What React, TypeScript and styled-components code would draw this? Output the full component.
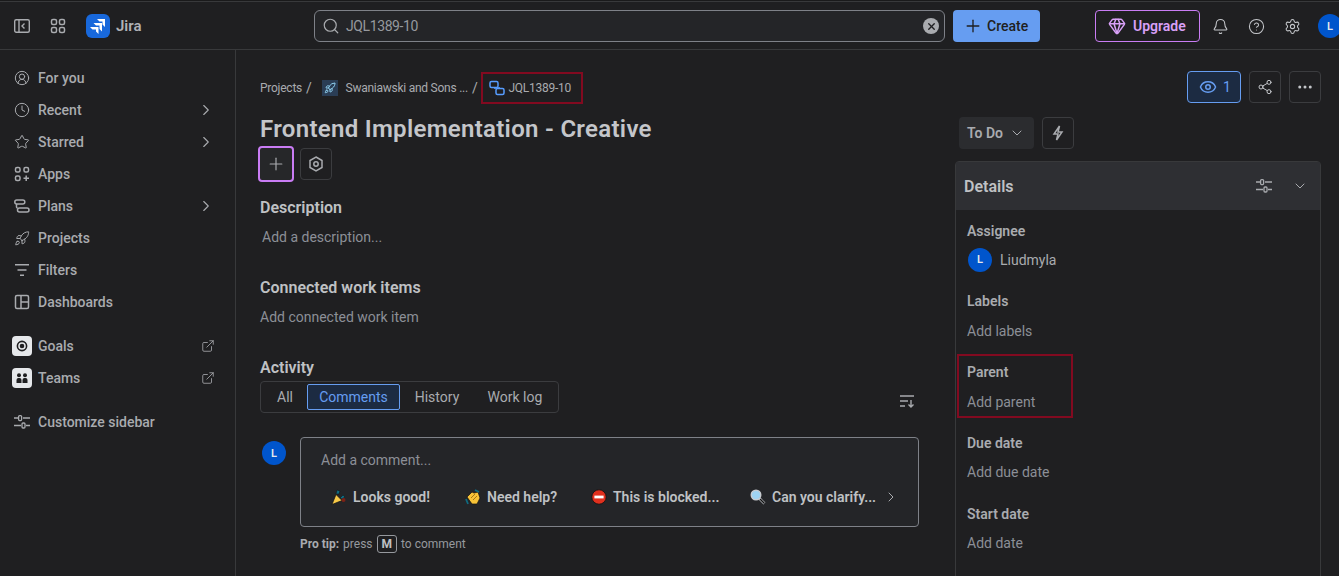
import React from 'react';
import styled, { createGlobalStyle } from 'styled-components';
import {
  Search, Plus, Gem, Bell, CircleHelp, Settings, Eye, Share2, Ellipsis, ChevronRight, ChevronDown,
  CircleUserRound, Clock, Star, Rocket, ExternalLink, X,
} from 'lucide-react';

const GlobalStyle = createGlobalStyle`
  html, body { margin: 0; padding: 0; background: #1f1f21; }
  body { font-family: Roboto, "Noto Sans", sans-serif; color: #bfc1c4; overflow: hidden; }
  * { box-sizing: border-box; }
`;

const Page = styled.div`
  width: 1339px;
  height: 576px;
  overflow: hidden;
  display: flex;
  flex-direction: column;
  border-top: 1px solid #1a1a1b;
`;

const TopBar = styled.header`
  height: 49px;
  flex: none;
  display: flex;
  align-items: center;
  border-top: 1px solid #38393b;
  border-bottom: 1px solid #38393b;
  padding-top: 1px;
`;

const TopLeft = styled.div`
  width: 314px;
  flex: none;
  display: flex;
  align-items: center;
  padding-left: 14px;
  color: #a9abaf;
`;

const AppsGrid = styled.svg`
  margin-left: 20px;
`;

const Logo = styled.span`
  width: 24px;
  height: 24px;
  margin-left: 20px;
  border-radius: 6px;
  background: #1868db;
  display: flex;
  align-items: center;
  justify-content: center;
`;

const LogoName = styled.span`
  margin-left: 6px;
  font-size: 15px;
  font-weight: 600;
  color: #b0b2b6;
`;

const SearchBox = styled.div`
  width: 631px;
  height: 32px;
  flex: none;
  display: flex;
  align-items: center;
  padding: 0 5px 0 7px;
  border: 1px solid #7e8188;
  border-radius: 6px;
  background: #242528;
  color: #a9abaf;
  font-size: 14px;
`;

const SearchText = styled.span`
  margin-left: 6px;
  flex: 1;
  color: #96999e;
  letter-spacing: -0.4px;
`;

const ClearBadge = styled.span`
  width: 16px;
  height: 16px;
  border-radius: 50%;
  background: #a9abaf;
  color: #1f1f21;
  display: flex;
  align-items: center;
  justify-content: center;
`;

const CreateButton = styled.button`
  width: 87px;
  height: 32px;
  margin-left: 8px;
  flex: none;
  display: flex;
  align-items: center;
  gap: 4px;
  padding: 0 0 0 10px;
  border: 0;
  border-radius: 4px;
  background: #669df1;
  color: #1f1f21;
  font: 500 14px Roboto, sans-serif;
`;

const UpgradeButton = styled.button`
  width: 105px;
  height: 32px;
  margin-left: 55px;
  flex: none;
  display: flex;
  align-items: center;
  gap: 7px;
  padding: 0 0 0 12px;
  border: 1px solid #c97cf4;
  border-radius: 4px;
  background: transparent;
  color: #d8a0f7;
  font: 600 14px Roboto, sans-serif;
`;

const TopIcons = styled.div`
  display: flex;
  align-items: center;
  gap: 18px;
  margin-left: 11px;
  color: #c4c6ca;
`;

const TopIcon = styled.span`
  width: 18px;
  height: 18px;
  display: flex;
  align-items: center;
  justify-content: center;
`;

const Avatar = styled.span<{ $edge?: boolean }>`
  width: 24px;
  height: 24px;
  flex: none;
  border-radius: 50%;
  background: #0055cc;
  color: #e6e8eb;
  font-size: 11px;
  font-weight: 600;
  display: flex;
  align-items: center;
  justify-content: center;
  margin-left: ${(p) => (p.$edge ? '-1px' : '0')};
`;

const Body = styled.div`
  flex: 1;
  min-height: 0;
  display: flex;
`;

const Sidebar = styled.nav`
  width: 236px;
  flex: none;
  padding-top: 12px;
  border-right: 1px solid #38393b;
`;

const NavRow = styled.div<{ $gapBefore?: number }>`
  height: 32px;
  margin-top: ${(p) => p.$gapBefore ?? 0}px;
  display: flex;
  align-items: center;
  padding: 0 20px 0 14px;
  color: #a9abaf;
  font-size: 14px;
  font-weight: 500;
`;

const NavIcon = styled.span`
  width: 16px;
  height: 16px;
  margin-right: 8px;
  flex: none;
  display: flex;
  align-items: center;
  justify-content: center;
`;

const NavTile = styled.span`
  width: 20px;
  height: 20px;
  margin: 0 6px 0 -2px;
  flex: none;
  border-radius: 4px;
  background: #e6e8eb;
  display: flex;
  align-items: center;
  justify-content: center;
`;

const NavLabel = styled.span`
  flex: 1;
`;

const Main = styled.main`
  flex: 1;
  min-width: 0;
  display: flex;
  position: relative;
`;

const Content = styled.section`
  width: 683px;
  flex: none;
  padding: 21px 0 0 24px;
`;

const Crumbs = styled.div`
  height: 33px;
  display: flex;
  align-items: center;
  font-size: 12px;
  letter-spacing: -0.25px;
  color: #a9abaf;
`;

const Sep = styled.span`
  margin: 0 4px;
  font-size: 14px;
`;

const ProjectThumb = styled.span`
  width: 16px;
  height: 16px;
  margin: 0 8px 0 6px;
  background: #2a3d55;
  display: flex;
  align-items: center;
  justify-content: center;
`;

const CurrentCrumb = styled.span`
  height: 32px;
  width: 102px;
  display: flex;
  align-items: center;
  gap: 3px;
  padding-left: 6px;
  border: 2px solid #820a20;
`;

const Title = styled.h1`
  margin: 9px 0 0;
  font-size: 24px;
  line-height: 32px;
  font-weight: 600;
  letter-spacing: 0.3px;
  color: #c4c6ca;
`;

const ActionRow = styled.div`
  margin: 1px 0 0 -2px;
  display: flex;
  align-items: center;
  gap: 6px;
`;

const AddButton = styled.span`
  width: 36px;
  height: 36px;
  border: 2px solid #c97cf4;
  border-radius: 4px;
  background: #262729;
  color: #a9abaf;
  display: flex;
  align-items: center;
  justify-content: center;
`;

const IconButton = styled.span<{ $muted?: boolean }>`
  width: 32px;
  height: 32px;
  flex: none;
  border: 1px solid #3b3c3f;
  border-radius: 4px;
  color: ${(p) => (p.$muted ? '#a9abaf' : '#c4c6ca')};
  display: flex;
  align-items: center;
  justify-content: center;
`;

const SectionTitle = styled.h2<{ $top: number }>`
  margin: ${(p) => p.$top}px 0 0;
  font-size: 16px;
  line-height: 20px;
  font-weight: 600;
  color: #bfc1c4;
`;

const Placeholder = styled.p<{ $indent?: boolean }>`
  margin: 9px 0 0 ${(p) => (p.$indent ? '2px' : '0')};
  font-size: 14px;
  line-height: 20px;
  color: #8c8f97;
`;

const TabRow = styled.div`
  margin-top: 3px;
  width: 659px;
  display: flex;
  align-items: center;
  justify-content: space-between;
`;

const Tabs = styled.div`
  width: 299px;
  height: 32px;
  display: flex;
  align-items: center;
  padding-left: 2px;
  border: 1px solid #3b3c3f;
  border-radius: 4px;
`;

const Tab = styled.span<{ $active?: boolean; $w: number }>`
  width: ${(p) => p.$w}px;
  height: 26px;
  display: flex;
  align-items: center;
  justify-content: center;
  font-size: 14px;
  border-radius: 2px;
  border: 1px solid ${(p) => (p.$active ? '#669df1' : 'transparent')};
  background: ${(p) => (p.$active ? '#1c2b42' : 'transparent')};
  color: ${(p) => (p.$active ? '#669df1' : '#a9abaf')};
`;

const SortIcon = styled.svg`
  margin: 8px 4px 0 0;
`;

const CommentRow = styled.div`
  margin-top: 24px;
  display: flex;
  gap: 14px;
  padding-left: 2px;
`;

const CommentAvatarWrap = styled.div`
  padding-top: 4px;
`;

const CommentCol = styled.div`
  width: 619px;
`;

const CommentBox = styled.div`
  height: 90px;
  padding: 12px 20px 0;
  border: 1px solid #7e8188;
  border-radius: 4px;
  background: #242528;
`;

const CommentHint = styled.div`
  font-size: 14px;
  line-height: 20px;
  color: #8c8f97;
`;

const Chips = styled.div`
  margin: 17px 0 0 10px;
  display: flex;
  align-items: center;
  height: 20px;
`;

const Chip = styled.span<{ $w: number }>`
  width: ${(p) => p.$w}px;
  flex: none;
  display: flex;
  align-items: center;
  gap: 6px;
  font-size: 14px;
  font-weight: 600;
  white-space: nowrap;
  color: #bfc1c4;
`;

const ChipNext = styled.span`
  flex: none;
  display: flex;
  color: #a9abaf;
`;

const ProTip = styled.div`
  margin-top: 8px;
  display: flex;
  align-items: center;
  gap: 4px;
  font-size: 12px;
  color: #96999e;
  b { font-weight: 700; color: #a9abaf; }
`;

const Key = styled.kbd`
  height: 18px;
  padding: 0 4px;
  border: 1px solid #96999e;
  border-radius: 3px;
  display: inline-flex;
  align-items: center;
  font: 700 12px Roboto, sans-serif;
  color: #bfc1c4;
`;

const Aside = styled.aside`
  width: 366px;
  flex: none;
  margin-left: 36px;
`;

const StatusRow = styled.div`
  margin: 67px 0 0 4px;
  display: flex;
  gap: 8px;
`;

const StatusButton = styled.span`
  width: 75px;
  height: 32px;
  padding-left: 8px;
  display: flex;
  align-items: center;
  gap: 6px;
  border-radius: 4px;
  background: #2b2c2f;
  color: #a9abaf;
  font-size: 14px;
  font-weight: 600;
`;

const Panel = styled.div`
  margin-top: 12px;
  height: 420px;
  border: 1px solid #38393b;
  border-radius: 4px 4px 0 0;
`;

const PanelHead = styled.div`
  height: 48px;
  display: flex;
  align-items: center;
  padding: 0 12px 0 8px;
  background: #2e2f33;
  font-size: 16px;
  font-weight: 600;
  color: #bfc1c4;
`;

const PanelTitle = styled.span`
  flex: 1;
`;

const PanelTools = styled.span`
  display: flex;
  align-items: center;
  gap: 20px;
  color: #a9abaf;
`;

const FieldList = styled.div`
  padding: 2.5px 0 0 1px;
`;

const Field = styled.div<{ $marked?: boolean }>`
  width: 116px;
  height: 64px;
  margin-bottom: 6.75px;
  padding: 6px 8px;
  border: 2px solid ${(p) => (p.$marked ? '#820a20' : 'transparent')};
  display: flex;
  flex-direction: column;
  gap: 9.5px;
  white-space: nowrap;
  font-size: 14px;
  line-height: 20px;
`;

const FieldName = styled.span`
  font-size: 14px;
  font-weight: 600;
  color: #a9abaf;
`;

const FieldValue = styled.span`
  height: 20px;
  color: #8c8f97;
  display: flex;
  align-items: center;
  gap: 8px;
`;

const AssigneeAvatar = styled(Avatar)`
  margin-left: 1px;
`;

const Person = styled.span`
  color: #a9abaf;
`;

const TopRight = styled.div`
  position: absolute;
  top: 21px;
  right: 18px;
  display: flex;
  gap: 8px;
`;

const WatchButton = styled.span`
  width: 54px;
  height: 32px;
  padding-left: 11px;
  display: flex;
  align-items: center;
  gap: 6px;
  border: 1px solid #669df1;
  border-radius: 4px;
  background: #1c2b42;
  color: #669df1;
  font-size: 14px;
`;

const Sliders = () => (
  <svg width="16" height="16" viewBox="0 0 16 16" fill="none" stroke="currentColor" strokeWidth="1.3">
    <path d="M0 4h4M9 4h7M0 11.5h7M12 11.5h4" />
    <rect x="4.6" y="1.6" width="3" height="5" rx="1" />
    <rect x="8" y="9" width="3" height="5" rx="1" />
  </svg>
);

const ExtLink = () => <ExternalLink size={14} strokeWidth={1.4} />;

const Row = ({ icon, label, chevron }: { icon: React.ReactNode; label: string; chevron?: boolean }) => (
  <NavRow>
    <NavIcon>{icon}</NavIcon>
    <NavLabel>{label}</NavLabel>
    {chevron && <ChevronRight size={18} strokeWidth={1.5} />}
  </NavRow>
);

const WorkItemIcon = () => (
  <svg width="16" height="16" viewBox="0 0 16 16" fill="none" stroke="#579dff" strokeWidth="1.5">
    <rect x="1" y="1.5" width="8" height="6" rx="1.5" />
    <rect x="7" y="8.5" width="8" height="6" rx="1.5" />
    <path d="M6 7.5v1.5M10 7v1.5" />
  </svg>
);

const PartyEmoji = () => (
  <svg width="16" height="16" viewBox="0 0 16 16">
    <path d="M1 15.500l4-10 6 6z" fill="#f7c948" stroke="#111" strokeWidth=".7" />
    <path d="M5 5l1-4 3 1-1 3zM9 9l3-3 2 2-3 2z" fill="#0f6a80" stroke="#111" strokeWidth=".5" />
    <circle cx="12.500" cy="11" r="2" fill="#7a2016" />
  </svg>
);

const ClapEmoji = () => (
  <svg width="16" height="16" viewBox="0 0 16 16">
    <path d="M2 8l5-5 2 1 4-1 2 6-3 6H7z" fill="#f7c237" stroke="#111" strokeWidth=".7" />
    <path d="M6 9l4-4M8 11l4-4" stroke="#8a6410" strokeWidth=".8" />
    <path d="M1 10l2 5M10 1l4 2" stroke="#0f6a80" strokeWidth="1.800" />
  </svg>
);

const BlockedEmoji = () => (
  <svg width="16" height="16" viewBox="0 0 16 16">
    <circle cx="8" cy="8" r="7.2" fill="#e0301e" stroke="#111" strokeWidth=".8" />
    <rect x="3.4" y="6.6" width="9.2" height="2.8" fill="#fff" />
  </svg>
);

const SearchEmoji = () => (
  <svg width="16" height="16" viewBox="0 0 16 16">
    <path d="M9.500 9.500l5 5" stroke="#c9ccd1" strokeWidth="2.600" />
    <path d="M10 10l4.500 4.500" stroke="#111" strokeWidth="1.400" />
    <circle cx="6" cy="6" r="4.800" fill="#9fd3f2" stroke="#c9ccd1" strokeWidth="1.400" />
  </svg>
);

const App = () => {
  return (
    <Page>
      <GlobalStyle />
      <TopBar>
        <TopLeft>
          <svg width="16" height="16" viewBox="0 0 16 16" fill="none" stroke="currentColor" strokeWidth="1.400">
            <rect x="0.700" y="1.700" width="14.600" height="12.600" rx="1.500" />
            <path d="M5 2v12M10.500 5.500 8 8l2.500 2.500" />
          </svg>
          <AppsGrid width="16" height="16" viewBox="0 0 16 16" fill="none" stroke="currentColor" strokeWidth="1.5">
            <rect x="1.5" y="1.5" width="5" height="5" rx="1.5" />
            <rect x="9.5" y="1.5" width="5" height="5" rx="1.5" />
            <rect x="1.5" y="9.5" width="5" height="5" rx="1.5" />
            <rect x="9.5" y="9.5" width="5" height="5" rx="1.5" />
          </AppsGrid>
          <Logo>
            <svg width="18" height="18" viewBox="0 0 18 18" fill="#fff">
              <path d="M8 2h8v8l-2.500-2.500V4.500H10.500zM4.500 6H13v8.500l-2.500-2.500V8.500H7zM1 10h8.500v7L7 14.500v-2H3.500z" />
            </svg>
          </Logo>
          <LogoName>Jira</LogoName>
        </TopLeft>
        <SearchBox>
          <Search size={18} strokeWidth={1.6} />
          <SearchText>JQL1389-10</SearchText>
          <ClearBadge><X size={11} strokeWidth={3} /></ClearBadge>
        </SearchBox>
        <CreateButton><Plus size={20} strokeWidth={1.6} />Create</CreateButton>
        <UpgradeButton><Gem size={18} strokeWidth={2} />Upgrade</UpgradeButton>
        <TopIcons>
          <TopIcon><Bell size={17} strokeWidth={1.5} /></TopIcon>
          <TopIcon><CircleHelp size={17} strokeWidth={1.5} /></TopIcon>
          <TopIcon><Settings size={17} strokeWidth={1.5} /></TopIcon>
          <Avatar $edge>L</Avatar>
        </TopIcons>
      </TopBar>
      <Body>
        <Sidebar>
          <Row icon={<CircleUserRound size={16} strokeWidth={1.5} />} label="For you" />
          <Row icon={<Clock size={16} strokeWidth={1.5} />} label="Recent" chevron />
          <Row icon={<Star size={16} strokeWidth={1.5} />} label="Starred" chevron />
          <Row
            icon={
              <svg width="16" height="16" viewBox="0 0 16 16" fill="none" stroke="currentColor" strokeWidth="1.5">
                <rect x="1.500" y="1.500" width="4.500" height="4.500" rx="1.500" />
                <rect x="10" y="1.500" width="4.500" height="4.500" rx="1.500" />
                <rect x="1.500" y="10" width="4.500" height="4.500" rx="1.500" />
                <path d="M12.200 9.500v5.500M9.500 12.200H15" />
              </svg>
            }
            label="Apps"
          />
          <Row
            icon={
              <svg width="16" height="16" viewBox="0 0 16 16" fill="none" stroke="currentColor" strokeWidth="1.5">
                <rect x="0.800" y="2" width="10" height="4" rx="2" />
                <rect x="3.500" y="10" width="11.500" height="4" rx="2" />
                <path d="M2.500 6v3a1.500 1.500 0 0 0 1 1" />
              </svg>
            }
            label="Plans"
            chevron
          />
          <Row icon={<Rocket size={17} strokeWidth={1.5} />} label="Projects" />
          <Row
            icon={
              <svg width="16" height="16" viewBox="0 0 16 16" fill="none" stroke="currentColor" strokeWidth="1.5">
                <path d="M1 2.700h14M3.500 8h9M6 13.300h4" />
              </svg>
            }
            label="Filters"
          />
          <Row
            icon={
              <svg width="16" height="16" viewBox="0 0 16 16" fill="none" stroke="currentColor" strokeWidth="1.5">
                <rect x="1.500" y="1.500" width="13" height="13" rx="1.500" />
                <path d="M7 1.500v13M7 8h7.500" />
              </svg>
            }
            label="Dashboards"
          />
          <NavRow $gapBefore={12}>
            <NavTile>
              <svg width="12" height="12" viewBox="0 0 12 12" fill="none" stroke="#1f1f21" strokeWidth="1.600">
                <circle cx="6" cy="6" r="4.600" />
                <circle cx="6" cy="6" r="1.500" fill="#1f1f21" />
              </svg>
            </NavTile>
            <NavLabel>Goals</NavLabel>
            <ExtLink />
          </NavRow>
          <NavRow>
            <NavTile>
              <svg width="12" height="12" viewBox="0 0 12 12" fill="#1f1f21">
                <circle cx="3" cy="3.200" r="2" />
                <circle cx="9" cy="3.200" r="2" />
                <path d="M.5 11V8a2 2 0 0 1 2-2h1a2 2 0 0 1 2 2v3zM6.500 11V8a2 2 0 0 1 2-2h1a2 2 0 0 1 2 2v3z" />
              </svg>
            </NavTile>
            <NavLabel>Teams</NavLabel>
            <ExtLink />
          </NavRow>
          <NavRow $gapBefore={12}>
            <NavIcon><Sliders /></NavIcon>
            <NavLabel>Customize sidebar</NavLabel>
          </NavRow>
        </Sidebar>
        <Main>
          <Content>
            <Crumbs>
              Projects<Sep>/</Sep>
              <ProjectThumb><Rocket size={12} color="#8fd0f0" strokeWidth={2} /></ProjectThumb>
              Swaniawski and Sons ...<Sep>/</Sep>
              <CurrentCrumb><WorkItemIcon />JQL1389-10</CurrentCrumb>
            </Crumbs>
            <Title>Frontend Implementation - Creative</Title>
            <ActionRow>
              <AddButton><Plus size={20} strokeWidth={1.4} /></AddButton>
              <IconButton $muted>
                <svg width="16" height="16" viewBox="0 0 16 16" fill="none" stroke="currentColor" strokeWidth="1.500">
                  <path d="M8 1l6 3.500v7L8 15l-6-3.500v-7z" />
                  <circle cx="8" cy="8" r="2.200" />
                </svg>
              </IconButton>
            </ActionRow>
            <SectionTitle $top={16}>Description</SectionTitle>
            <Placeholder $indent>Add a description...</Placeholder>
            <SectionTitle $top={31}>Connected work items</SectionTitle>
            <Placeholder>Add connected work item</Placeholder>
            <SectionTitle $top={31}>Activity</SectionTitle>
            <TabRow>
              <Tabs>
                <Tab $w={44}>All</Tab>
                <Tab $active $w={93}>Comments</Tab>
                <Tab $w={74}>History</Tab>
                <Tab $w={82}>Work log</Tab>
              </Tabs>
              <SortIcon width="16" height="16" viewBox="0 0 16 16" fill="none" stroke="#a9abaf" strokeWidth="1.400">
                <path d="M1 3h14M1 8h8M1 13h5M12 7v7M9.500 11.500 12 14l2.500-2.500" />
              </SortIcon>
            </TabRow>
            <CommentRow>
              <CommentAvatarWrap><Avatar>L</Avatar></CommentAvatarWrap>
              <CommentCol>
                <CommentBox>
                  <CommentHint>Add a comment...</CommentHint>
                  <Chips>
                    <Chip $w={134}><PartyEmoji />Looks good!</Chip>
                    <Chip $w={126}><ClapEmoji />Need help?</Chip>
                    <Chip $w={159}><BlockedEmoji />This is blocked...</Chip>
                    <Chip $w={133}><SearchEmoji />Can you clarify...</Chip>
                    <ChipNext><ChevronRight size={16} strokeWidth={1.5} /></ChipNext>
                  </Chips>
                </CommentBox>
                <ProTip><b>Pro tip:</b> press <Key>M</Key> to comment</ProTip>
              </CommentCol>
            </CommentRow>
          </Content>
          <Aside>
            <StatusRow>
              <StatusButton>To Do<ChevronDown size={16} strokeWidth={1.5} /></StatusButton>
              <IconButton $muted>
                <svg width="16" height="16" viewBox="0 0 16 16" fill="none" stroke="currentColor" strokeWidth="1.500">
                  <path d="M9.500 1 4 9h4l-1.500 6L12 7H8z" />
                </svg>
              </IconButton>
            </StatusRow>
            <Panel>
              <PanelHead>
                <PanelTitle>Details</PanelTitle>
                <PanelTools><Sliders /><ChevronDown size={16} strokeWidth={1.5} /></PanelTools>
              </PanelHead>
              <FieldList>
                <Field>
                  <FieldName>Assignee</FieldName>
                  <FieldValue><AssigneeAvatar>L</AssigneeAvatar><Person>Liudmyla</Person></FieldValue>
                </Field>
                <Field><FieldName>Labels</FieldName><FieldValue>Add labels</FieldValue></Field>
                <Field $marked><FieldName>Parent</FieldName><FieldValue>Add parent</FieldValue></Field>
                <Field><FieldName>Due date</FieldName><FieldValue>Add due date</FieldValue></Field>
                <Field><FieldName>Start date</FieldName><FieldValue>Add date</FieldValue></Field>
              </FieldList>
            </Panel>
          </Aside>
          <TopRight>
            <WatchButton><Eye size={18} strokeWidth={2} />1</WatchButton>
            <IconButton><Share2 size={16} strokeWidth={1.5} /></IconButton>
            <IconButton><Ellipsis size={18} strokeWidth={2} /></IconButton>
          </TopRight>
        </Main>
      </Body>
    </Page>
  );
};

export default App;
